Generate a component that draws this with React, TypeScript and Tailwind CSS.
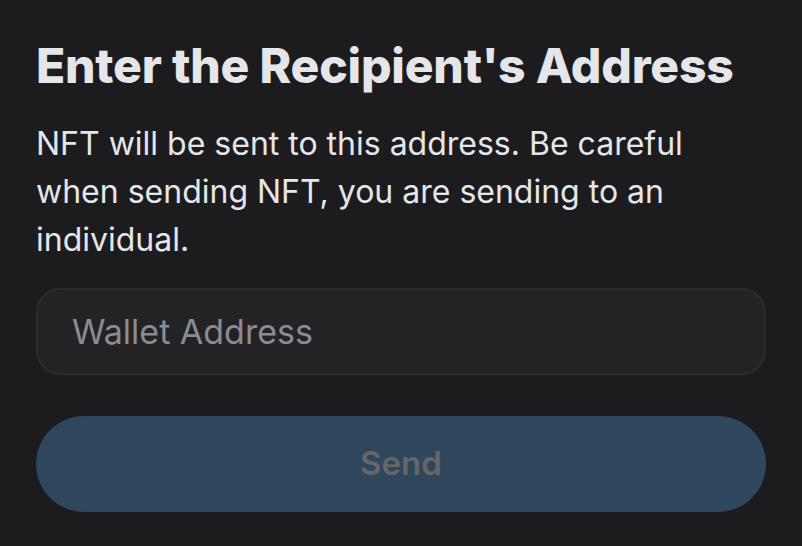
export default function App() {
  return (
    <div
      className="min-h-[546px] w-full bg-[#1c1c1e] px-[36px] pt-[33px]"
      style={{ fontFamily: "Inter, 'Noto Sans', sans-serif" }}
    >
      <h1 className="text-[48px] font-extrabold leading-[66px] tracking-[-0.2px] text-[#e5e6e9]">
        Enter the Recipient's Address
      </h1>
      <p className="mt-[21px] text-[32px] leading-[48px] text-[#e5e6e9]">
        NFT will be sent to this address. Be careful when sending NFT, you are sending to an
        individual.
      </p>
      <input
        placeholder="Wallet Address"
        className="mt-[24px] block h-[87px] w-full rounded-[24px] border-2 border-[#2c2c2e] bg-[#232325] px-[34px] text-[34px] text-[#e5e6e9] outline-none placeholder:text-[#8a8c92]"
      />
      <button
        disabled
        className="mt-[41px] flex h-[96px] w-full items-center justify-center rounded-full bg-[#2f475d] text-[33px] font-semibold text-[#666666]"
      >
        Send
      </button>
    </div>
  );
}
